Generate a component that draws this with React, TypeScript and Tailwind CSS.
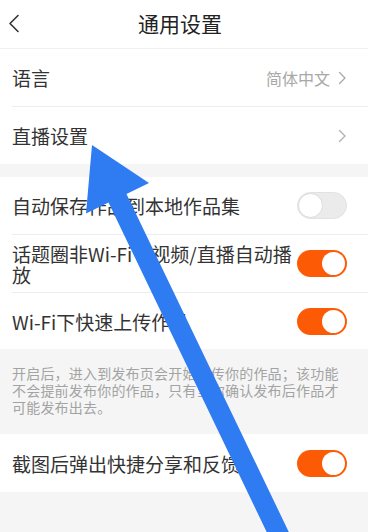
import type { ReactNode } from 'react';

const FONT = { fontFamily: '"Noto Sans CJK SC", "Noto Sans", sans-serif' };

function Chevron({ className }: { className?: string }) {
  return (
    <svg width="9" height="14" viewBox="0 0 9 14" className={className} fill="none">
      <path d="M1.5 1.5 L7 7 L1.5 12.5" stroke="currentColor" strokeWidth="1.3" strokeLinecap="round" strokeLinejoin="round" />
    </svg>
  );
}

function Toggle({ on }: { on: boolean }) {
  if (on) {
    return (
      <div className="w-[50px] h-[27px] rounded-full bg-[#fd5a05] flex items-center justify-end p-[2px] shrink-0">
        <div className="w-[23px] h-[23px] rounded-full bg-white" />
      </div>
    );
  }
  return (
    <div className="w-[50px] h-[27px] rounded-full bg-[#ebebeb] border border-[#e2e2e2] flex items-center justify-start shrink-0">
      <div className="w-[25px] h-[25px] rounded-full bg-white border border-[#dcdcdc]" />
    </div>
  );
}

function Row({ height, border, children, right }: { height: string; border?: boolean; children: ReactNode; right: ReactNode }) {
  return (
    <div className="bg-white pl-3">
      <div className={`${height} flex items-center justify-between pr-[21px] ${border ? 'border-b border-[#ededed]' : ''}`}>
        <div className="text-[19px] leading-[21px] text-[#333]">{children}</div>
        {right}
      </div>
    </div>
  );
}

export default function App() {
  return (
    <div className="relative w-[368px] h-[532px] overflow-hidden bg-[#f5f5f5]" style={FONT}>
      {/* Header */}
      <div className="h-[49px] bg-white border-b border-[#f0f0f0] flex items-center relative">
        <svg width="12" height="19" viewBox="0 0 12 19" className="absolute left-[8px] top-[14px] text-[#333]" fill="none">
          <path d="M10 1.5 L2 9.5 L10 17.5" stroke="currentColor" strokeWidth="1.6" strokeLinecap="round" strokeLinejoin="round" />
        </svg>
        <h1 className="w-full text-center text-[21px] text-[#222] pr-2">通用设置</h1>
      </div>

      <Row
        height="h-[58px]"
        border
        right={
          <div className="flex items-center gap-[8px] text-[#a8a8a8]">
            <span className="text-[16px]">简体中文</span>
            <Chevron />
          </div>
        }
      >
        语言
      </Row>
      <Row height="h-[57px]" right={<Chevron className="text-[#b0b0b0]" />}>
        直播设置
      </Row>

      <div className="h-[13px]" />

      <Row height="h-[58px]" border right={<Toggle on={false} />}>
        自动保存作品到本地作品集
      </Row>
      <Row height="h-[58px]" border right={<Toggle on />}>
        话题圈非Wi-Fi下视频/直播自动播
        <br />放
      </Row>
      <Row height="h-[56px]" right={<Toggle on />}>
        Wi-Fi下快速上传作品
      </Row>

      {/* Description */}
      <div className="px-3 pt-[16px] pb-[18px] text-[14px] leading-[17px] text-[#a3a3a3] tracking-[0.2px]">
        开启后，进入到发布页会开始上传你的作品；该功能
        <br />
        不会提前发布你的作品，只有当你确认发布后作品才
        <br />
        可能发布出去。
      </div>

      <Row height="h-[58px]" right={<Toggle on />}>
        截图后弹出快捷分享和反馈
      </Row>

      {/* Annotation arrow */}
      <svg className="absolute inset-0 pointer-events-none" width="368" height="532" viewBox="0 0 368 532">
        <polygon
          points="92,145 149,183 126.5,194 299.7,554.7 281.7,563.3 108.5,202.5 86,213.4"
          fill="#2e7bf2"
        />
      </svg>
    </div>
  );
}
